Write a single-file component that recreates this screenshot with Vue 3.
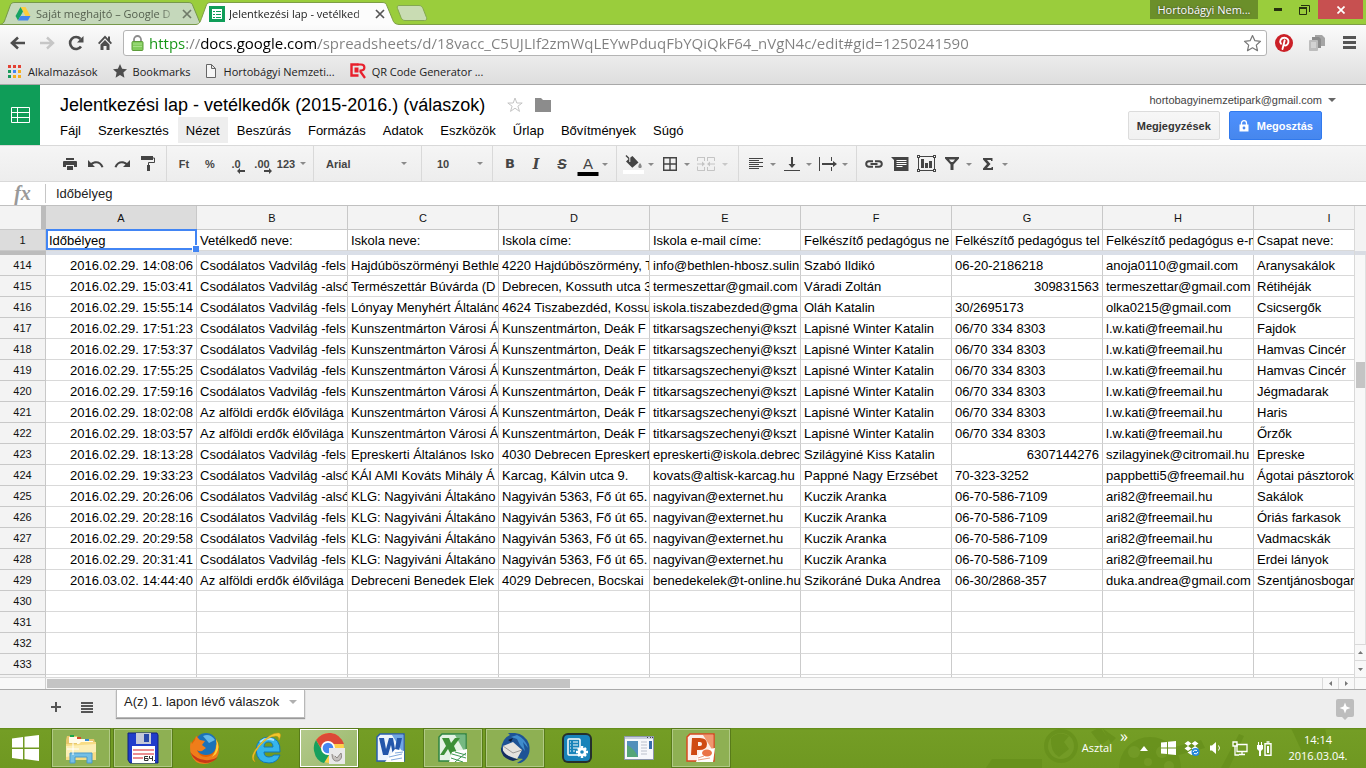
<script setup>
import { ref } from 'vue'

const url = ref('https://docs.google.com/spreadsheets/d/18vacc_C5UJLIf2zmWqLEYwPduqFbYQiQkF64_nVgN4c/edit#gid=1250241590')
const formula = ref('Időbélyeg')
const menus = ['Fájl', 'Szerkesztés', 'Nézet', 'Beszúrás', 'Formázás', 'Adatok', 'Eszközök', 'Űrlap', 'Bővítmények', 'Súgó']
const letters = ['A', 'B', 'C', 'D', 'E', 'F', 'G', 'H', 'I']
const heads = ['Időbélyeg', 'Vetélkedő neve:', 'Iskola neve:', 'Iskola címe:', 'Iskola e-mail címe:', 'Felkészítő pedagógus ne', 'Felkészítő pedagógus tel', 'Felkészítő pedagógus e-m', 'Csapat neve:']

const felso = 'Csodálatos Vadvilág -fels'
const also = 'Csodálatos Vadvilág -alsó'
const erdok = 'Az alföldi erdők élővilága'
const kunIsk = 'Kunszentmárton Városi Á'
const kunCim = 'Kunszentmárton, Deák F'
const kunMail = 'titkarsagszechenyi@kszt'
const kun = ['Lapisné Winter Katalin', '06/70 334 8303', 'l.w.kati@freemail.hu']
const nagy = ['KLG: Nagyiváni Áltakáno', 'Nagyiván 5363, Fő út 65.', 'nagyivan@externet.hu', 'Kuczik Aranka', '06-70-586-7109', 'ari82@freemail.hu']

const rows = [
  [414, '2016.02.29. 14:08:06', felso, 'Hajdúböszörményi Bethle', '4220 Hajdúböszörmény, T', 'info@bethlen-hbosz.sulin', 'Szabó Ildikó', '06-20-2186218', 'anoja0110@gmail.com', 'Aranysakálok'],
  [415, '2016.02.29. 15:03:41', also, 'Természettár Búvárda (D', 'Debrecen, Kossuth utca 3', 'termeszettar@gmail.com', 'Váradi Zoltán', '309831563', 'termeszettar@gmail.com', 'Rétihéják'],
  [416, '2016.02.29. 15:55:14', felso, 'Lónyay Menyhért Általáno', '4624 Tiszabezdéd, Kossu', 'iskola.tiszabezded@gma', 'Oláh Katalin', '30/2695173', 'olka0215@gmail.com', 'Csicsergők'],
  [417, '2016.02.29. 17:51:23', felso, kunIsk, kunCim, kunMail, ...kun, 'Fajdok'],
  [418, '2016.02.29. 17:53:37', felso, kunIsk, kunCim, kunMail, ...kun, 'Hamvas Cincér'],
  [419, '2016.02.29. 17:55:25', felso, kunIsk, kunCim, kunMail, ...kun, 'Hamvas Cincér'],
  [420, '2016.02.29. 17:59:16', felso, kunIsk, kunCim, kunMail, ...kun, 'Jégmadarak'],
  [421, '2016.02.29. 18:02:08', erdok, kunIsk, kunCim, kunMail, ...kun, 'Haris'],
  [422, '2016.02.29. 18:03:57', erdok, kunIsk, kunCim, kunMail, ...kun, 'Őrzők'],
  [423, '2016.02.29. 18:13:28', felso, 'Epreskerti Általános Isko', '4030 Debrecen Epreskert', 'epreskerti@iskola.debrec', 'Szilágyiné Kiss Katalin', '6307144276', 'szilagyinek@citromail.hu', 'Epreske'],
  [424, '2016.02.29. 19:33:23', also, 'KÁI AMI Kováts Mihály Á', 'Karcag, Kálvin utca 9.', 'kovats@altisk-karcag.hu', 'Pappné Nagy Erzsébet', '70-323-3252', 'pappbetti5@freemail.hu', 'Ágotai pásztorok'],
  [425, '2016.02.29. 20:26:06', also, ...nagy, 'Sakálok'],
  [426, '2016.02.29. 20:28:16', felso, ...nagy, 'Óriás farkasok'],
  [427, '2016.02.29. 20:29:58', felso, ...nagy, 'Vadmacskák'],
  [428, '2016.02.29. 20:31:41', felso, ...nagy, 'Erdei lányok'],
  [429, '2016.03.02. 14:44:40', erdok, 'Debreceni Benedek Elek', '4029 Debrecen, Bocskai', 'benedekelek@t-online.hu', 'Szikoráné Duka Andrea', '06-30/2868-357', 'duka.andrea@gmail.com', 'Szentjánosbogar'],
  ...[430, 431, 432, 433, 434].map((n) => [n, '', '', '', '', '', '', '', '', '']),
]
const isNumber = (v, c) => c === 0 || (c === 6 && /^\d+$/.test(v))
</script>

<template>
  <div class="screen">
    <header class="titlebar">
      <div class="tab tab-back">
        <svg class="tab-shape" width="203" height="25" viewBox="0 0 203 25"><path d="M0 24.500C4 24 4.500 21 6 17L10 6C11 3 12 2.500 15 2.500H188C191 2.500 192 3 193 6L198 18C199.500 22 200 24 203 24.500Z" fill="#c5d8bb" stroke="#76984a" /></svg>
        <svg class="fav" width="16" height="16" viewBox="0 0 16 16"><path d="M5.500 1h5l5 9h-5z" fill="#fdce3d" /><path d="M5.500 1 0.500 10 3 14.500 8 5.500z" fill="#17a363" /><path d="M5.500 10h10L13 14.500H3z" fill="#4586ee" /></svg>
        <span class="tab-text">Saját meghajtó – Google D</span>
        <button class="tab-close" aria-label="Lap bezárása"><svg width="10" height="10" viewBox="0 0 10 10"><path d="M1 1l8 8M9 1 1 9" stroke="#6f7a68" stroke-width="1.700" /></svg></button>
      </div>
      <div class="tab tab-front">
        <svg class="tab-shape" width="203" height="25" viewBox="0 0 203 25"><path d="M0 24.500C4 24 4.500 21 6 17L10 6C11 3 12 2.500 15 2.500H186C189 2.500 190 3 191 6L196 18C197.500 22 198 24 203 24.500V25H0Z" fill="#fcfcfc" /><path d="M0 24.500C4 24 4.500 21 6 17L10 6C11 3 12 2.500 15 2.500H186C189 2.500 190 3 191 6L196 18C197.500 22 198 24 203 24.500" fill="none" stroke="#7d9e45" /></svg>
        <svg class="fav" width="16" height="16" viewBox="0 0 16 16"><rect width="16" height="16" fill="#0f9d58" /><path d="M3 3h10v10H3z" fill="#fff" /><path d="M4 5h2v1H4zm3 0h5v1H7zM4 8h2v1H4zm3 0h5v1H7zm-3 3h2v1H4zm3 0h5v1H7z" fill="#0f9d58" /></svg>
        <span class="tab-text">Jelentkezési lap - vetélked</span>
        <button class="tab-close" aria-label="Lap bezárása"><svg width="10" height="10" viewBox="0 0 10 10"><path d="M1 1l8 8M9 1 1 9" stroke="#555" stroke-width="1.700" /></svg></button>
      </div>
      <button class="newtab" aria-label="Új lap"><svg width="34" height="18" viewBox="0 0 34 18"><path d="M4 1.500h20c2 0 3 1 4 3l3.500 9c.6 2-.2 3-2 3H10c-2 0-3-1-4-3L2.500 4.500c-.6-2 0-3 1.500-3z" fill="#c9dcb3" stroke="#83a850" /></svg></button>
      <span class="grow"></span>
      <button class="profile">Hortobágyi Nem...</button>
      <button class="win" aria-label="Kis méret"><svg width="8" height="3"><rect width="8" height="3" fill="#26310f" /></svg></button>
      <button class="win" aria-label="Előző méret"><svg width="11" height="10" viewBox="0 0 11 10"><path d="M.5 3h7v6.500h-7zM0 3h8" fill="none" stroke="#26310f" /><path d="M0 2h8v2H0z" fill="#26310f" /><path d="M2 .5h8.500V7" fill="none" stroke="#26310f" /></svg></button>
      <button class="win close" aria-label="Bezárás"><svg width="8" height="8" viewBox="0 0 8 8"><path d="M.5.5l7 7M7.500.5l-7 7" stroke="#fff" stroke-width="1.700" /></svg></button>
    </header>

    <div class="browser">
      <div class="navbar">
        <button class="nav" aria-label="Vissza"><svg width="16" height="14" viewBox="0 0 16 14"><path d="M15 7H2M8 1.500 2 7l6 5.500" fill="none" stroke="#4d4d4d" stroke-width="2.600" /></svg></button>
        <button class="nav" aria-label="Előre"><svg width="16" height="14" viewBox="0 0 16 14"><path d="M1 7h13M8 1.500 14 7l-6 5.500" fill="none" stroke="#c6c6c6" stroke-width="2.400" /></svg></button>
        <button class="nav" aria-label="Frissítés"><svg width="16" height="16" viewBox="0 0 16 16"><path d="M13 11.500A6 6 0 1 1 12.500 4" fill="none" stroke="#4d4d4d" stroke-width="2.600" /><path d="M15.500 1v6.500H9z" fill="#4d4d4d" /></svg></button>
        <button class="nav" aria-label="Kezdőlap"><svg width="16" height="16" viewBox="0 0 16 16"><path d="M8 .5 1 8l1.300 1.200L8 3.300l5.700 5.900L15 8l-2-2.200V1.500h-2v2.200z" fill="#4d4d4d" /><path d="M3.500 9.500 8 5l4.500 4.500V15H9.500v-4h-3v4h-3z" fill="#4d4d4d" /></svg></button>
        <div class="urlbar">
          <svg class="lock" width="13" height="16" viewBox="0 0 13 16"><path d="M3 8V4.500a3.500 3.500 0 0 1 7 0V8" fill="none" stroke="#8d8d8d" stroke-width="1.800" /><rect x="1" y="6.500" width="11" height="9" rx="1" fill="#82cc5c" stroke="#5d9c3b" /><path d="M2 9h9M2 11.500h9" stroke="#a8e08a" /></svg>
          <input v-model="url" aria-label="Cím" spellcheck="false" />
          <svg width="19" height="18" viewBox="0 0 19 18"><path d="M9.500 1.500l2.400 5.200 5.600.6-4.200 3.800 1.200 5.600-5-2.900-5 2.900 1.200-5.600L1.500 7.300l5.600-.6z" fill="#fff" stroke="#777" stroke-width="1.200" stroke-linejoin="round" /></svg>
        </div>
        <button class="ext" aria-label="Pinterest"><svg width="18" height="18" viewBox="0 0 18 18"><circle cx="9" cy="9" r="9" fill="#cb2027" /><path d="M6 9.800C4 7 6 3.700 9.300 3.700c3 0 4.500 2 4.100 4.500-.3 2.500-2.600 4-4.400 2.800M9.700 6.300 7.500 15" fill="none" stroke="#fff" stroke-width="1.900" stroke-linecap="round" /></svg></button>
        <button class="ext" aria-label="Bővítmény"><svg width="18" height="18" viewBox="0 0 18 18"><path d="M7 1h7l3 3v8H7z" fill="#a5a5a5" /><path d="M4 3h7l2 2v9H4z" fill="#8c8c8c" /><rect x="1" y="6" width="9" height="11" rx="1" fill="#bdbdbd" /><rect x="3" y="8" width="5" height="6" fill="#d3d3d3" /></svg></button>
        <button class="ext" aria-label="Menü"><svg width="13" height="13" viewBox="0 0 13 13"><path d="M0 0h13v3H0zm0 5h13v3H0zm0 5h13v3H0z" fill="#555" /></svg></button>
      </div>
      <nav class="bookmarks">
        <a href="#"><svg width="14" height="14" viewBox="0 0 14 14"><path d="M0 1h3v3H0zm5 0h3v3H5zm5 0h3v3h-3z" fill="#e34133" /><path d="M0 6h3v3H0z" fill="#1a9a5b" /><path d="M5 6h3v3H5z" fill="#4285f4" /><path d="M10 6h3v3h-3zM5 11h3v3H5zm5 0h3v3h-3z" fill="#f5ae1d" /><path d="M0 11h3v3H0z" fill="#1a9a5b" /></svg>Alkalmazások</a>
        <a href="#"><svg width="14" height="14" viewBox="0 0 14 14"><path d="M7 0l2.100 4.700 4.900.5-3.600 3.400 1 5.100L7 11.100l-4.400 2.600 1-5.100L0 5.200l4.900-.5z" fill="#4d4d4d" /></svg>Bookmarks</a>
        <a href="#" class="page"><svg width="10" height="14" viewBox="0 0 10 14"><path d="M.5.5h5l4 4v9h-9zM5.500.5v4h4" fill="#f6f6f6" stroke="#666" /></svg>Hortobágyi Nemzeti...</a>
        <a href="#"><svg width="16" height="16" viewBox="0 0 16 16"><path d="M8.500 1.500h-7v11h7" fill="none" stroke="#e8202c" stroke-width="2.400" /><path d="M4.500 4.500h4v5h-4z" fill="#e8202c" /><path d="M7.500 1.500H11c4.500 0 4.500 6 0 6H9.500M10 8l5 7" fill="none" stroke="#e8202c" stroke-width="2.200" /></svg>QR Code Generator ...</a>
      </nav>
    </div>

    <div class="dochead">
      <a class="logo" href="#" aria-label="Táblázatok kezdőlapja"><svg width="19" height="17" viewBox="0 0 19 17"><path d="M.5.5h18v15H.5zM.5 5.500h18M.5 10.500h18M6.500.5v15" fill="none" stroke="#fff" /></svg></a>
      <div class="docinfo">
        <div class="titleline">
          <h1>Jelentkezési lap - vetélkedők (2015-2016.) (válaszok)</h1>
          <button aria-label="Csillagozás"><svg width="16" height="16" viewBox="0 0 16 16"><path d="M8 1l1.800 5h5.400l-4.300 3.200 1.600 5.200L8 11.200l-4.500 3.200 1.600-5.200L.8 6h5.400z" fill="none" stroke="#c4c4c4" /></svg></button>
          <button aria-label="Mappa"><svg width="16" height="14" viewBox="0 0 16 14"><path d="M0 0h6l2 2h8v12H0z" fill="#8c8c8c" /></svg></button>
        </div>
        <nav class="menus"><button v-for="m in menus" :key="m" :class="{ active: m === 'Nézet' }">{{ m }}</button></nav>
      </div>
      <div class="account">
        <button class="mail">hortobagyinemzetipark@gmail.com<i class="caret dark"></i></button>
        <div class="acts">
          <button class="gbtn">Megjegyzések</button>
          <button class="gbtn blue"><svg width="10" height="12" viewBox="0 0 10 12"><path d="M2.500 5V3.200a2.500 2.500 0 0 1 5 0V5" fill="none" stroke="#fff" stroke-width="1.300" /><path d="M.5 4.500h9v7h-9z" fill="#fff" /><circle cx="5" cy="8" r="1.400" fill="#4a88f0" /></svg>Megosztás</button>
        </div>
      </div>
    </div>

    <div class="toolbar">
      <div class="group first">
        <button aria-label="Nyomtatás"><svg width="14" height="12" viewBox="0 0 14 12"><path d="M3 0h8v2H3zM1 3h12q1 0 1 1v5h-3V7H3v2H0V4q0-1 1-1zM4 8h6v4H4z" fill="#444" /></svg></button>
        <button aria-label="Visszavonás"><svg width="16" height="10" viewBox="0 0 16 10"><path d="M0 1v7h7L4.500 5.500C8 3 12 4 13.500 8.500L15.500 8C13.500 2 7.500.5 3 4z" fill="#444" /></svg></button>
        <button aria-label="Újra"><svg width="16" height="10" viewBox="0 0 16 10"><path d="M16 1v7H9l2.500-2.500C8 3 4 4 2.500 8.500L.5 8C2.500 2 8.500.5 13 4z" fill="#444" /></svg></button>
        <button aria-label="Formátum másolása"><svg width="14" height="16" viewBox="0 0 14 16"><path d="M0 0h12v4H0z" fill="#444" /><path d="M12 2h1.500v4.500h-6V9" fill="none" stroke="#444" /><path d="M6 9h3v6H6z" fill="#444" /></svg></button>
      </div>
      <div class="group">
        <button>Ft</button>
        <button>%</button>
        <button class="dec">.0<svg width="9" height="6" viewBox="0 0 9 6"><path d="M0 3l3-3v2h5v2H3v2z" fill="#444" /></svg></button>
        <button class="dec">.00<svg width="9" height="6" viewBox="0 0 9 6"><path d="M9 3 6 0v2H1v2h5v2z" fill="#444" /></svg></button>
        <button class="fmt">123<i class="caret"></i></button>
      </div>
      <div class="group pick"><select class="font" aria-label="Betűtípus"><option>Arial</option></select><i class="caret"></i></div>
      <div class="group pick small"><select class="size" aria-label="Betűméret"><option>10</option></select><i class="caret"></i></div>
      <div class="group">
        <button class="glyph b">B</button>
        <button class="glyph i">I</button>
        <button class="glyph s">S</button>
        <button class="drop color"><span><b>A</b><u></u></span><i class="caret"></i></button>
      </div>
      <div class="group">
        <button class="drop" aria-label="Kitöltőszín"><svg width="22" height="20" viewBox="0 0 22 20"><path d="M3.500 1l3 3L9.500 2l6 6.500-6.200 5.200L3 7.500l2.500-2.500-3-3z" fill="#444" /><path d="M6.800 3v5" stroke="#efefef" /><path d="M17 9c2.500 3 2 5 0 5s-2.500-2 0-5z" fill="#888" /><path d="M0 16h21v4H0z" fill="#fff" /></svg><i class="caret"></i></button>
        <button class="drop" aria-label="Szegélyek"><svg width="14" height="14" viewBox="0 0 14 14"><path d="M.7.700h12.600v12.600H.7zM7 .7v12.600M.7 7h12.600" fill="none" stroke="#444" stroke-width="1.400" /></svg><i class="caret"></i></button>
        <button class="drop off" aria-label="Egyesítés" disabled><svg width="18" height="14" viewBox="0 0 18 14"><path d="M7 .5H.5V4M.5 9.500v4H7M11 .5h6.500V4M17.500 9.500v4H11M7.500 0v4M10.500 0v4M7.500 10v4M10.500 10v4M0 7h6M18 7h-6" fill="none" stroke="#c4c4c4" /><path d="M5 4.500 8 7 5 9.500zM13 4.500 10 7l3 2.500z" fill="#c4c4c4" /></svg><i class="caret"></i></button>
      </div>
      <div class="group">
        <button class="drop" aria-label="Vízszintes igazítás"><svg width="14" height="11" viewBox="0 0 14 11"><path d="M0 .5h14M0 2.500h10M0 4.500h14M0 6.500h10M0 8.500h14M0 10.500h10" stroke="#444" /></svg><i class="caret"></i></button>
        <button class="drop" aria-label="Függőleges igazítás"><svg width="16" height="15" viewBox="0 0 16 15"><path d="M7 1h2v7h2.500L8 12 4.500 8H7z" fill="#444" /><path d="M0 14.500h16" stroke="#444" /></svg><i class="caret"></i></button>
        <button class="drop" aria-label="Szöveg tördelése"><svg width="18" height="14" viewBox="0 0 18 14"><path d="M.5 0v14M12.500 0v4M12.500 10v4" stroke="#444" /><path d="M3 6h11V4l4 3-4 3V8H3z" fill="#444" /></svg><i class="caret"></i></button>
      </div>
      <div class="group last">
        <button aria-label="Link"><svg width="18" height="8" viewBox="0 0 18 8"><path d="M8 1.200H4a2.800 2.800 0 0 0 0 5.600h4M10 1.200h4a2.800 2.800 0 0 1 0 5.600h-4M5.500 4h7" fill="none" stroke="#444" stroke-width="2" /></svg></button>
        <button aria-label="Megjegyzés"><svg width="18" height="14" viewBox="0 0 18 14"><path d="M0 0h17.500v14H3V3z" fill="#444" /><path d="M5.500 3.500h10M5.500 5.500h10M5.500 7.500h10M5.500 9.500h6" stroke="#fff" /></svg></button>
        <button aria-label="Diagram"><svg width="19" height="17" viewBox="0 0 19 17"><path d="M1.500 1.500h16v14h-16z" fill="none" stroke="#444" /><path d="M0 0h3v3H0zm16 0h3v3h-3zM0 14h3v3H0zm16 0h3v3h-3zM4 4h3v9H4zm4 4h3v5H8zm4-2h3v7h-3z" fill="#444" /><path d="M1 1h1v1H1zm16 0h1v1h-1zM1 15h1v1H1zm16 0h1v1h-1z" fill="#fff" /></svg></button>
        <button class="drop" aria-label="Szűrő"><svg width="14" height="13" viewBox="0 0 14 13"><path d="M0 0h14v1.500L8.500 7.500V13h-3V7.500L0 1.500z" fill="#444" /><path d="M4 2.500h6L8 5H6z" fill="#eee" /></svg><i class="caret"></i></button>
        <button class="drop" aria-label="Függvények"><svg width="10" height="12" viewBox="0 0 10 12"><path d="M0 0h9.500v3H8V2H4l3.500 4L4 10h4.500V9H10v3H0v-1.500L4 6 0 1.500z" fill="#444" /></svg><i class="caret"></i></button>
      </div>
    </div>

    <div class="formula">
      <label for="fx">fx</label>
      <input id="fx" v-model="formula" />
    </div>

    <main class="sheet">
      <div class="gridwrap">
        <table>
          <colgroup><col class="cnum" /><col v-for="l in letters" :key="l" class="cdata" /></colgroup>
          <thead>
            <tr class="letters"><th class="corner"></th><th v-for="(l, i) in letters" :key="l" :class="{ sel: i === 0 }">{{ l }}</th></tr>
            <tr><th class="num sel">1</th><td v-for="(h, i) in heads" :key="h" :class="{ active: i === 0 }">{{ h }}<i v-if="i === 0" class="frame"></i></td></tr>
            <tr class="freeze"><th></th><td colspan="9"></td></tr>
          </thead>
          <tbody>
            <tr v-for="r in rows" :key="r[0]"><th class="num">{{ r[0] }}</th><td v-for="(v, c) in r.slice(1)" :key="c" :class="{ right: isNumber(v, c) }">{{ v }}</td></tr>
          </tbody>
        </table>
      </div>
      <div class="vscroll">
        <div class="vtop"></div>
        <div class="track"><div class="vthumb"></div></div>
        <button aria-label="Fel"><svg width="5" height="3"><path d="M0 3h5L2.500 0z" fill="#777" /></svg></button>
        <button aria-label="Le"><svg width="5" height="3"><path d="M0 0h5L2.500 3z" fill="#777" /></svg></button>
      </div>
    </main>
    <div class="hscroll">
      <div class="hpad"></div>
      <div class="htrack"><div class="hthumb"></div></div>
      <button aria-label="Balra"><svg width="3" height="5"><path d="M3 0v5L0 2.500z" fill="#777" /></svg></button>
      <button aria-label="Jobbra"><svg width="3" height="5"><path d="M0 0v5l3-2.500z" fill="#777" /></svg></button>
      <div class="hend"></div>
    </div>

    <footer class="tabsbar">
      <button class="add" aria-label="Munkalap hozzáadása"><svg width="10" height="10"><path d="M4 0h2v4h4v2H6v4H4V6H0V4h4z" fill="#555" /></svg></button>
      <button class="all" aria-label="Összes munkalap"><svg width="12" height="11"><path d="M0 0h12v2H0zm0 3h12v2H0zm0 3h12v2H0zm0 3h12v2H0z" fill="#555" /></svg></button>
      <button class="sheettab">A(z) 1. lapon lévő válaszok<i class="caret wide"></i></button>
      <span class="grow"></span>
      <button class="explore" aria-label="Felfedezés"><svg width="18" height="21" viewBox="0 0 18 21"><path d="M2 0h14q2 0 2 2v14q0 2-2 2h-4l-3 3-3-3H2q-2 0-2-2V2Q0 0 2 0z" fill="#bdbdbd" /><path d="M9 3.500 10.500 7.500 14.500 9l-4 1.500L9 14.500 7.500 10.500 3.500 9l4-1.500z" fill="#fff" /></svg></button>
    </footer>

    <div class="taskbar">
      <svg class="pattern" width="500" height="40" viewBox="0 0 500 40" aria-hidden="true">
        <g fill="#668f1b" opacity=".75"><circle cx="195" cy="18" r="17" /><circle cx="195" cy="18" r="13" fill="#749c27" /><path d="M185 10q8-8 18-2l-5 6 5 7-10 8q-9-5-8-19z" /><path d="M126 31h50v9h-56zM225 4l9-5 9 12-8 6zM236 0l14 10-5 5z" /><circle cx="284" cy="40" r="31" /><g fill="#739a27"><circle cx="268" cy="24" r="6" /><circle cx="296" cy="24" r="6" /><circle cx="282" cy="34" r="4" /><circle cx="303" cy="38" r="5" /></g><path d="M305 20l30-8 4 8-30 8zM355 40l18-34 5 2-15 32zM425 0h34l5 24h-28z" /></g>
      </svg>
      <button class="start" aria-label="Start"><svg width="27" height="26" viewBox="0 0 27 26"><path d="M0 3.500 11 2v10.500H0zM12.500 1.800 27 0v12.500H12.500zM0 14h11v10.500L0 23zM12.500 14H27v12l-14.500-2z" fill="#fff" /></svg></button>
      <button class="app run" aria-label="Fájlkezelő"><svg width="32" height="32" viewBox="0 0 32 32"><path d="M2 4h10l2 3h15l1 3v18H1V8z" fill="#e6c66d" /><path d="M4 5h9v6H4zM12 7h9v6h-9zM20 9h8v6h-8z" fill="#fffbe8" /><path d="M5 3h4v2H5z" fill="#18a54a" /><path d="M12 5h4v2h-4z" fill="#d54a2a" /><path d="M20 7h4v2h-4z" fill="#338ad1" /><path d="M1 12h13l2-2h15v18H1z" fill="#f7dc85" /><path d="M1 14l30-2v8L1 25z" fill="#fceeb5" /><path d="M5 31V21h22v10h-5v-6H10v6z" fill="#75bfe5" stroke="#4a99c9" /><path d="M8 11v12M2 17h12" stroke="#fff" /></svg></button>
      <button class="app run" aria-label="Total Commander"><svg width="32" height="32" viewBox="0 0 32 32"><path d="M1 1h29l1 2v28H3l-2-3z" fill="#203dcb" stroke="#10237a" /><path d="M9 1h15v11H9z" fill="#c5c9d8" /><path d="M17 2h5v8h-5z" fill="#2848a8" /><path d="M5 14h23v17H5z" fill="#fff" /><path d="M6 18h21M6 22h21M6 26h10" stroke="#d51c24" stroke-width="1.200" /><path d="M21 24.500h-3.500v4H21v-2h-3.500M22.500 24v2.500h3M25.500 24v5M27 28.500h1" fill="none" stroke="#333" /></svg></button>
      <button class="app" aria-label="Firefox"><svg width="32" height="32" viewBox="0 0 32 32"><circle cx="16" cy="16" r="14" fill="#e66000" /><circle cx="17" cy="12" r="11" fill="#1b72b8" /><path d="M14 4q7-3 12 4l-6 3z" fill="#63b8e8" /><path d="M2 9l1 3 3-4 1-4 4 4 5 1-3 4 4 3-4 3q-3 1-5-1 2 7 9 7 10-1 10-13 5 7 1 13-5 7-13 7-10 0-13-10-2-7 0-13z" fill="#ef7d1a" /><path d="M27 7q5 8 0 15l-4 3q6-8 4-18z" fill="#ffd238" /><path d="M1 20q5 11 15 11 8 0 13-6-6 4-13 3-9-1-15-8z" fill="#c73816" /></svg></button>
      <button class="app" aria-label="Internet Explorer"><svg width="32" height="32" viewBox="0 0 32 32"><path d="M29 20H13q0 5 5 5 3 0 5-2h6q-3 8-11 8Q6 31 5 18 6 6 17 5q13 1 12 15zM13 15h9q0-5-4.500-5T13 15z" fill="#36b5ec" stroke="#1377b4" /><path d="M9 10Q15 5 23 8" fill="none" stroke="#a2e5ff" stroke-width="2" /><path d="M4 30Q-3 26 8 13 20 0 28 1q3 1 0 7 0-4-3-4Q17 4 8 15 0 25 4 30z" fill="#f3c62c" stroke="#d59a12" stroke-width=".5" /></svg></button>
      <button class="app run current" aria-label="Chrome"><svg width="32" height="32" viewBox="0 0 32 32"><circle cx="16" cy="16" r="15" fill="#ffd04b" /><path d="M3 8Q9 0 18 1t13 11H16L9 18z" fill="#dc4a38" /><path d="M3 8l7 12 6 3-5 8Q3 29 1 19 0 13 3 8z" fill="#17a05e" /><circle cx="15" cy="16" r="7" fill="#fff" /><circle cx="15" cy="16" r="5.300" fill="#4587f1" /><path d="M16 16h16v16H16z" fill="#e9e9e9" /><path d="M19 22q0 8 6 7 5-2 3-8l-4 5-2-2" fill="#c6c2bf" stroke="#8d8884" /></svg></button>
      <button class="app" aria-label="Word"><svg width="32" height="32" viewBox="0 0 32 32"><path d="M5 2h24v27H2V5z" fill="#edf4fd" stroke="#2a5db0" stroke-width="1.500" /><path d="M17 3h11v18z" fill="#6fa6e4" /><path d="M4 6h5l2 11 3-11h4l2 11 2-11h5l-4 17h-5l-2-10-3 10H8z" fill="#2456ab" /><path d="M20 17l9 2v11H10z" fill="#fff" /><path d="M14 25l13-3M16 28l11-2M20 21l8-1" stroke="#80a9dc" /></svg></button>
      <button class="app run" aria-label="Excel"><svg width="32" height="32" viewBox="0 0 32 32"><path d="M5 2h24v27H2V5z" fill="#e5f3e5" stroke="#2e8441" stroke-width="1.500" /><path d="M18 3h10v18z" fill="#76b982" /><path d="M5 6h7l2 5 4-5h5l-6 8 4 9h-7l-3-6-4 6H3l6-9z" fill="#3d9037" /><path d="M15 20l15-3v13H12z" fill="#fff" /><path d="M15 22l14 4M14 26l12 4M18 20l11 3M18 30l11-9" stroke="#3f9852" /></svg></button>
      <button class="app run" aria-label="Thunderbird"><svg width="32" height="32" viewBox="0 0 32 32"><path d="M16 1q10 1 14 11 2 9-3 15-4 5-9 4l6-4-5-1Q5 29 2 18 3 6 11 3l-2-2z" fill="#1e5395" /><path d="M18 3q9 4 11 13l-5-6 2 9-5-6-3-6-6-2z" fill="#3f8ccc" /><path d="M4 14l10-4 9 8-5 9-14-5z" fill="#e5e3df" /><path d="M4 14l10 7 9-3" fill="none" stroke="#9d9b99" /><path d="M2 15q-1 11 12 14l9-3-5 1Q6 25 2 15z" fill="#152e60" /><path d="M9 8l5-2-2 4z" fill="#0c1d38" /></svg></button>
      <button class="app" aria-label="Beállítások"><svg width="32" height="32" viewBox="0 0 32 32"><rect x="1" y="1" width="30" height="30" rx="6" fill="#25302d" /><rect x="3" y="3" width="26" height="26" rx="4" fill="#1983b9" /><rect x="7" y="7" width="12" height="16" rx="1" fill="none" stroke="#fff" stroke-width="1.500" /><path d="M9 10h1m2 0h5M9 13h1m2 0h5M9 16h1m2 0h5M9 19h1m2 0h2" stroke="#fff" /><path d="M21 14v12M15 20h12M17 16l8 8M25 16l-8 8" stroke="#fff" stroke-width="2.500" /><circle cx="21" cy="20" r="4.300" fill="#fff" /><circle cx="21" cy="20" r="1.800" fill="#1983b9" /></svg></button>
      <button class="app" aria-label="Ablak"><svg width="32" height="32" viewBox="0 0 32 32"><path d="M1.500 4.500h29v23h-29z" fill="#f7f8fb" stroke="#8d96ac" /><path d="M2 5h28v2H2z" fill="#c8cedd" /><path d="M24 5.500h1m2 0h1m1 0h1" stroke="#444" /><path d="M4 9h11v16H4z" fill="#528fba" /><path d="M4 13q8 4 11 12H4z" fill="#55a577" /><path d="M18 10h6m-6 3h6m-6 3h6m-6 3h6m-6 3h6" stroke="#bbc0cb" /><path d="M26 9h3v8h-3z" fill="#376daa" /></svg></button>
      <button class="app run" aria-label="PowerPoint"><svg width="32" height="32" viewBox="0 0 32 32"><path d="M5 2h24v27H2V5z" fill="#fdefea" stroke="#d84a20" stroke-width="1.500" /><path d="M18 3h10v16z" fill="#f0986f" /><path d="M7 6h8q7 0 7 6t-8 6h-2v5H6zM13 10v4h2q2 0 2-2t-2-2z" fill="#cf4a13" fill-rule="evenodd" /><path d="M15 19l15-3-2 14H11z" fill="#fff" /><ellipse cx="22" cy="21" rx="5" ry="3.500" fill="#ea7447" /><path d="M13 26l6-2M13 28l12-2" stroke="#eca082" /></svg></button>
      <span class="grow"></span>
      <span class="desk">Asztal</span>
      <span class="more">»</span>
      <button class="tray" aria-label="Rejtett ikonok"><svg width="8" height="5"><path d="M0 5h8L4 0z" fill="#fff" /></svg></button>
      <button class="tray" aria-label="Windows"><svg width="15" height="14" viewBox="0 0 15 14"><path d="M0 1.500 6 1v5.500H0zM7 .8 15 0v6.500H7zM0 7.500h6V13l-6-.5zM7 7.500h8V14l-8-.8z" fill="#fff" /></svg></button>
      <button class="tray" aria-label="Dropbox"><svg width="16" height="15" viewBox="0 0 16 15"><path d="M4 0l3.500 2.500L4 5 .5 2.500zM11 0l3.500 2.500L11 5 7.500 2.500zM4 5l3.500 2.500L4 10 .5 7.500zM11 5l3.500 2.500L11 10 7.500 7.500zM7.500 9l4 2.500-4 2.500-4-2.500z" fill="#fff" /><circle cx="11.500" cy="11" r="4" fill="#2588dc" /><path d="M9 11q1-3 4-1.500M14 11q-1 3-4 1.500" fill="none" stroke="#fff" /></svg></button>
      <button class="tray" aria-label="Hangerő"><svg width="14" height="14" viewBox="0 0 14 14"><path d="M1 4.500h2L7 1v12L3 9.500H1z" fill="#fff" /><path d="M9.500 4.500q2 2.500 0 5" fill="none" stroke="#fff" /></svg></button>
      <button class="tray" aria-label="Hálózat"><svg width="16" height="15" viewBox="0 0 16 15"><path d="M5 3.500h10v7H5zM10 10.500V13M7 13.500h6" fill="none" stroke="#fff" stroke-width="1.300" /><path d="M1 1h4v4H1zM3 5v9h4" fill="none" stroke="#fff" stroke-width="1.300" /></svg></button>
      <button class="tray" aria-label="Akkumulátor"><svg width="15" height="15" viewBox="0 0 15 15"><path d="M8 2.700h6v11.600H8zM9.500 1h3" fill="none" stroke="#fff" stroke-width="1.400" /><path d="M10 5h2v7h-2zM0 4h6v4L4 10v5H2v-5L0 8zM1 1h1v3H1zm3 0h1v3H4z" fill="#fff" /></svg></button>
      <div class="clock">14:14<br />2016.03.04.</div>
    </div>
  </div>
</template>

<style>
body { overflow: hidden; }
</style>

<style scoped>
.screen { display: flex; flex-direction: column; height: 100vh; overflow: hidden; background: #fff; color: #000; font: 13px "Liberation Sans", Arial, sans-serif; }
button { margin: 0; padding: 0; border: 0; background: none; font: inherit; color: inherit; display: flex; align-items: center; justify-content: center; white-space: nowrap; }
svg { display: block; flex: none; }
input { border: 0; outline: 0; padding: 0; background: none; min-width: 0; }
.grow { flex: 1; }

.titlebar { display: flex; flex: none; height: 24px; background: #9acd3c; border-bottom: 1px solid #7d9e45; font: 11px "Open Sans", "Noto Sans", sans-serif; padding-right: 3px; }
.tab { position: relative; flex: none; display: flex; align-items: center; width: 196px; height: 25px; padding: 2px 0 0 15px; box-sizing: border-box; }
.tab-front { z-index: 1; padding-left: 13px; width: 199px; }
.tab-shape { position: absolute; left: 0; top: 0; }
.fav, .tab-text, .tab-close { position: relative; }
.tab-text { width: 139px; margin-left: 5px; white-space: nowrap; color: #55604f; -webkit-mask-image: linear-gradient(90deg, #000 125px, transparent 141px); mask-image: linear-gradient(90deg, #000 125px, transparent 141px); }
.tab-front .tab-text { color: #222; margin-left: 4px; }
.tab-close { margin-left: 7px; }
.newtab { align-self: flex-start; margin: 4px 0 0; }
.profile { width: 108px; height: 19px; background: #6b8f2a; color: #fff; text-shadow: 0 0 2px #333; }
.win { width: 26px; height: 19px; }
.profile + .win { margin-left: 7px; }
.close { width: 45px; background: #c75050; color: #fff; }
.win + .win.close { margin-left: 1px; }

.browser { flex: none; background: linear-gradient(#fbfbfb, #dedede 58px); border-bottom: 1px solid #a8a8a8; }
.navbar { display: flex; align-items: center; height: 35px; padding-left: 3px; }
.nav { width: 29px; height: 29px; }
.urlbar { display: flex; align-items: center; flex: 1; height: 26px; box-sizing: border-box; margin-left: 4px; padding: 0 4px 0 7px; border: 1px solid #b4b4b4; border-radius: 3px; background: #fff; }
.urlbar input { flex: 1; margin-left: 5px; font: 15px "Open Sans", "Noto Sans", sans-serif; color: transparent; background: linear-gradient(90deg, #149414 36px, #808080 36px 51px, #000 51px 169px, #808080 169px); -webkit-background-clip: text; background-clip: text; }
.ext { width: 33px; height: 26px; }
.bookmarks { display: flex; align-items: center; gap: 15px; height: 22px; padding: 0 8px 2px; font: 11px "Open Sans", "Noto Sans", sans-serif; }
.bookmarks a { display: flex; align-items: center; gap: 6px; color: #222; text-decoration: none; white-space: nowrap; }
.bookmarks .page { gap: 8px; }

.dochead { display: flex; flex: none; height: 60px; border-bottom: 1px solid #d9d9d9; }
.logo { display: flex; align-items: center; justify-content: center; width: 40px; background: #0f9d58; }
.docinfo { flex: 1; padding: 8px 0 0 12px; }
.titleline { display: flex; align-items: center; height: 24px; padding-left: 8px; }
h1 { margin: 0 22px 0 0; font: 18px "Liberation Sans", Arial, sans-serif; white-space: nowrap; }
.titleline button + button { margin-left: 12px; }
.menus { display: flex; gap: 1px; }
.menus button { height: 26px; padding: 0 8px; }
.menus .active { background: #eee; }
.account { display: flex; flex-direction: column; align-items: flex-end; padding: 7px 30px 0 0; }
.mail { height: 15px; font-size: 11px; color: #444; gap: 6px; }
.acts { display: flex; gap: 9px; margin: 4px 14px 0 0; }
.gbtn { height: 29px; padding: 0 8px; border: 1px solid #dcdcdc; border-radius: 2px; background: linear-gradient(#f7f7f7, #f1f1f1); font-weight: bold; font-size: 11px; color: #333; }
.blue { gap: 8px; padding: 0 8px 0 9px; background: linear-gradient(#4d90fe, #4787ed); border-color: #3079ed; color: #fff; }

.caret { flex: none; width: 0; height: 0; border: 3px solid transparent; border-top-color: #8a8a8a; border-bottom: 0; }
.caret.dark { border-width: 4px; border-bottom: 0; border-top-color: #666; }
.caret.wide { border-width: 4px; border-bottom: 0; border-top-color: #b0b0b0; }

.toolbar { display: flex; flex: none; height: 35px; border-bottom: 1px solid #d9d9d9; background: linear-gradient(#f5f5f5, #ededed); font-weight: bold; font-size: 11px; color: #444; }
.group { display: flex; align-items: center; padding: 0 5px 0 4px; border-right: 1px solid #d9d9d9; }
.first { padding-left: 57px; }
.last { border: 0; }
.group button { width: 26px; height: 27px; position: relative; }
.group .fmt { width: 33px; gap: 5px; }
.dec svg { position: absolute; right: 3px; bottom: 3px; }
.pick { position: relative; width: 98px; }
.pick.small { width: 61px; }
.pick .caret { position: absolute; right: 14px; top: 16px; pointer-events: none; }
.pick.small .caret { right: 9px; }
select { appearance: none; width: 100%; height: 27px; border: 0; outline: 0; background: none; font: inherit; color: inherit; padding: 0 8px; }
.size { padding: 0 11px; }
.glyph { font-size: 14px; }
.b { font-family: "DejaVu Sans", sans-serif; font-size: 13px; }
.i { font-family: "DejaVu Serif", serif; font-style: italic; }
.s { text-decoration: line-through; font-style: italic; }
.group .drop { width: 36px; justify-content: flex-start; }
.group .off { width: 40px; }
.drop > :first-child { position: absolute; left: 13px; transform: translateX(-50%); }
.drop .caret { position: absolute; left: 27px; top: 13px; }
.drop.off .caret { left: 29px; border-top-color: #c8c8c8; }
.color span { width: 21px; text-align: center; line-height: 16px; margin-top: 4px; }
.color b { font-size: 15px; font-weight: normal; display: block; }
.color u { display: block; height: 4px; background: #000; }

.formula { display: flex; align-items: center; flex: none; height: 23px; border-bottom: 1px solid #c0c0c0; }
.formula label { width: 45px; height: 19px; border-right: 1px solid #c6c6c6; text-align: center; font: italic bold 20px/18px "Liberation Serif", serif; color: #999; }
.formula input { flex: 1; margin-left: 10px; font: 13px "Liberation Sans", Arial, sans-serif; color: #222; height: 21px; }

.sheet { display: flex; flex: 1; min-height: 0; }
.gridwrap { flex: 1; min-width: 0; overflow: hidden; }
table { width: 100%; table-layout: fixed; border-collapse: separate; border-spacing: 0; }
.cnum { width: 46px; }
.cdata { width: 151px; }
th { height: 20px; padding: 0; border: 0 solid #c8c8c8; border-width: 0 1px 1px 0; background: #f3f3f3; font-weight: normal; font-size: 11px; line-height: 20px; color: #111; }
.letters th { height: 23px; line-height: 22px; }
.letters .corner { border-right: 5px solid #bcbcbc; }
th.sel { background: #dcdcdc; }
td { height: 18px; padding: 2px 3px 0; border-right: 1px solid #cbcbcb; border-bottom: 1px solid #d9d9d9; line-height: 18px; white-space: nowrap; overflow: hidden; }
.right { text-align: right; }
.active { position: relative; overflow: visible; }
.frame { position: absolute; left: 0; top: -1px; right: -1px; bottom: 0; border: 2px solid #4285f4; }
.frame::after { content: ""; position: absolute; right: -4px; bottom: -4px; width: 6px; height: 6px; background: #4285f4; border: 1px solid #fff; border-width: 1px 0 0 1px; }
.freeze th, .freeze td { height: 4px; padding: 0; border: 0; line-height: 0; background: #dadfe8; }
.freeze th { background: #bcbcbc; }

.vscroll { display: flex; flex-direction: column; width: 11px; flex: none; border-left: 1px solid #d9d9d9; background: #f8f8f8; }
.vtop { height: 45px; background: #f3f3f3; border-bottom: 4px solid #d9dce3; }
.track { flex: 1; border-bottom: 1px solid #d9d9d9; border-right: 1px solid #e0e0e0; }
.vthumb { height: 26px; margin: 107px 0 0 1px; background: #c4c4c4; }
.vscroll button { height: 16px; border-bottom: 1px solid #d9d9d9; }
.vscroll button:last-child { border: 0; }
.hscroll { display: flex; flex: none; height: 11px; border-top: 1px solid #d9d9d9; border-bottom: 1px solid #aaa; background: #f8f8f8; }
.hpad { width: 45px; border-right: 1px solid #d0d0d0; }
.htrack { flex: 1; padding: 1px 0 1px 1px; }
.hthumb { width: 41%; height: 9px; background: #c4c4c4; }
.hscroll button { width: 16px; box-sizing: border-box; border-left: 1px solid #d9d9d9; }
.hend { width: 11px; border-left: 1px solid #d9d9d9; }

.tabsbar { display: flex; flex: none; height: 38px; background: #eee; }
.add, .all { width: 31px; height: 34px; }
.add { margin-left: 40px; }
.sheettab { height: 28px; margin-left: 14px; padding: 0 7px 4px; box-sizing: border-box; gap: 10px; background: #fff; border: 1px solid #b8b8b8; border-top: 0; box-shadow: 0 1px 1px #999; color: #222; }
.explore { align-self: flex-start; margin: 9px 12px 0 0; }

.taskbar { position: relative; display: flex; align-items: center; flex: none; height: 40px; background: linear-gradient(#5f8a17, #749d25 2px, #6f9821); font: 11px/16px "Open Sans", "Noto Sans", sans-serif; color: #fff; overflow: hidden; }
.pattern { position: absolute; right: 0; top: 0; }
.taskbar > :not(.pattern) { position: relative; }
.start { width: 50px; height: 40px; }
.app { width: 58px; height: 38px; margin: 0 2px; box-sizing: border-box; border: 1px solid transparent; }
.run { background: #8eb053; border-color: #b1ca86; box-shadow: 0 0 0 1px #587b1a; }
.current { background: linear-gradient(135deg, #b3c98b, #9ab96b); border-color: #fff; }
.desk { margin-right: 8px; }
.more { width: 12px; align-self: flex-start; font-size: 16px; }
.tray { width: 24px; height: 30px; }
.clock { width: 84px; margin-right: 6px; text-align: center; }
</style>
